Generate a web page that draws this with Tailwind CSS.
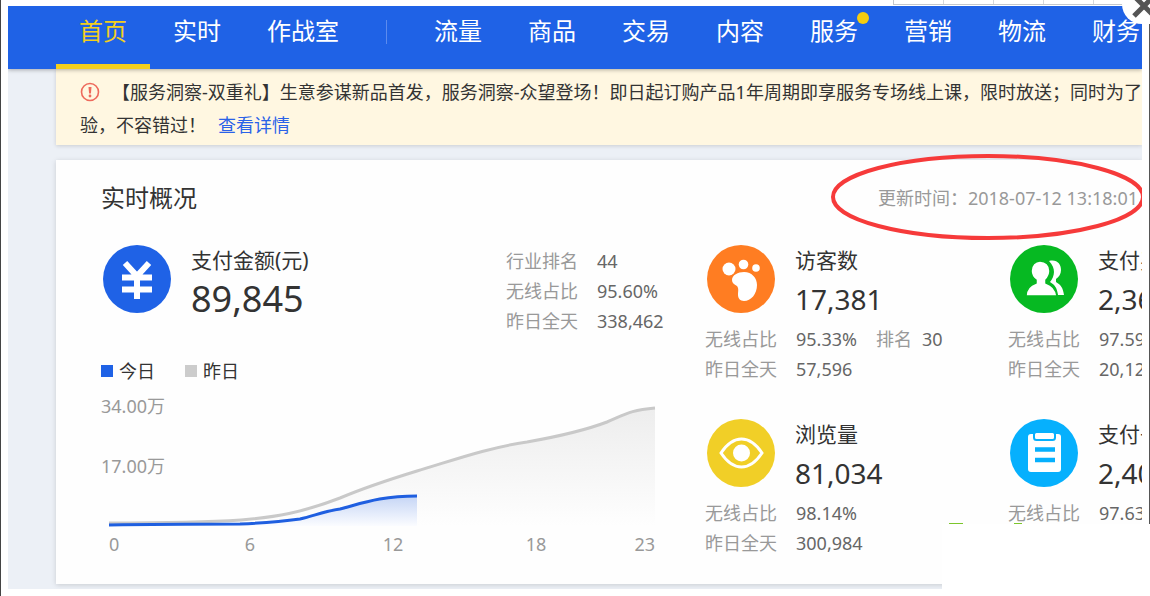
<!DOCTYPE html>
<html lang="zh-CN">
<head>
  <meta charset="UTF-8" />
  <meta name="viewport" content="width=device-width, initial-scale=1.0"/>
  <title>生意参谋 - 首页</title>
  <script src="https://cdn.jsdelivr.net/npm/@tailwindcss/browser@4"></script>
</head>
<body class="bg-white font-['Noto_Sans','Noto_Sans_CJK_SC',sans-serif] text-lg text-[#333]">

  <div class="relative min-h-screen overflow-hidden border-l border-[#444] pt-1.5 pr-2 pl-[7px]">

    <!-- browser tab edges above the page -->
    <div class="absolute top-0 right-0 flex h-[5px] w-[257px] border-b border-l border-[#c4c8cc]">
      <span class="w-[50px] border-r border-[#d4d8dc]"></span>
      <span class="w-[50px] border-r border-[#d4d8dc]"></span>
      <span class="w-[50px] border-r border-[#d4d8dc]"></span>
      <span class="w-[50px] border-r border-[#d4d8dc]"></span>
    </div>

    <div class="overflow-hidden bg-[#ecf0f6] pb-[5px]">
      <nav class="relative z-10 flex h-[63px] items-stretch bg-[#1f62e6] pl-12 text-2xl leading-[50px] whitespace-nowrap text-white shadow-[0_1px_4px_rgba(0,0,0,0.3)]">
        <a href="#" class="border-b-[5px] border-[#f3cf1d] px-[23px] text-[#f3cf1d]">首页</a>
        <a href="#" class="px-[23px]">实时</a>
        <a href="#" class="px-[23px]">作战室</a>
        <span class="mx-6 mt-3.5 h-6 w-px shrink-0 bg-[#5c8bee]"></span>
        <a href="#" class="px-[23px]">流量</a>
        <a href="#" class="px-[23px]">商品</a>
        <a href="#" class="px-[23px]">交易</a>
        <a href="#" class="px-[23px]">内容</a>
        <a href="#" class="relative px-[23px]">服务<span class="absolute top-1.5 right-3 size-3 rounded-full bg-[#f5cd10]"></span></a>
        <a href="#" class="px-[23px]">营销</a>
        <a href="#" class="px-[23px]">物流</a>
        <a href="#" class="px-[23px]">财务</a>
      </nav>

      <main class="pl-12">
        <section class="bg-[#fff7e1] pt-[7px] pb-[3px] pl-6 leading-[33px] whitespace-nowrap shadow-[0_1px_4px_rgba(0,0,0,0.15)]">
          <p>
            <svg class="mr-3 mb-1 inline-block size-5" viewBox="0 0 20 20" fill="none">
              <circle cx="10" cy="10" r="8.5" stroke="#ee6a5c" stroke-width="1.6"/>
              <path d="M8.500 5h3l-.6 6.500H9.100z" fill="#ee6a5c"/>
              <circle cx="10" cy="14" r="1.4" fill="#ee6a5c"/>
            </svg>【服务洞察-双重礼】生意参谋新品首发，服务洞察-众望登场！即日起订购产品1年周期即享服务专场线上课，限时放送；同时为了<br>
            验，不容错过！<a href="#" class="ml-3 text-[#2a62e8]">查看详情</a>
          </p>
        </section>

        <section class="mt-[15px] bg-[#fefefe] pt-[22px] pb-6 pl-[45px] shadow-[0_1px_5px_rgba(0,0,0,0.15)]">
          <header class="flex items-center justify-between pr-1 leading-8">
            <h1 class="text-2xl leading-8">实时概况</h1>
            <p class="text-[#999]">更新时间：2018-07-12 13:18:01</p>
          </header>

          <div class="mt-[31px] flex">
            <!-- payment amount and trend -->
            <div class="w-[604px] shrink-0">
              <div class="flex">
                <svg class="ml-0.5 size-[68px]" viewBox="0 0 68 68">
                  <circle cx="34" cy="34" r="34" fill="#1f62e6"/>
                  <path d="M22 18l12 13 12-13M19 32.500h30M19 44.500h30M34 30v24" fill="none" stroke="#fff" stroke-width="6"/>
                </svg>
                <div class="ml-5 w-[315px] pt-px">
                  <h2 class="text-[21px] leading-7">支付金额(元)</h2>
                  <p class="text-4xl leading-[50px]">89,845</p>
                </div>
                <dl class="grid grid-cols-[91px_auto] content-start pt-px leading-[30px]">
                  <dt class="text-[#999]">行业排名</dt><dd class="text-[#666]">44</dd>
                  <dt class="text-[#999]">无线占比</dt><dd class="text-[#666]">95.60%</dd>
                  <dt class="text-[#999]">昨日全天</dt><dd class="text-[#666]">338,462</dd>
                </dl>
              </div>

              <div class="mt-[21px] flex gap-[30px] leading-7">
                <span class="flex items-center gap-1.5"><i class="size-3 bg-[#1f62e6]"></i>今日</span>
                <span class="flex items-center gap-1.5"><i class="size-3 bg-[#ccc]"></i>昨日</span>
              </div>

              <svg class="mt-2.5 h-[165px] w-[560px]" viewBox="0 0 560 165">
                <defs>
                  <linearGradient id="gray" x1="0" y1="0" x2="0" y2="1">
                    <stop offset="0" stop-color="#ededed"/>
                    <stop offset="1" stop-color="#fefefe"/>
                  </linearGradient>
                  <linearGradient id="blue" x1="0" y1="0" x2="0" y2="1">
                    <stop offset="0" stop-color="#c5d5f5"/>
                    <stop offset="1" stop-color="#fbfcff"/>
                  </linearGradient>
                </defs>
                <path fill="url(#gray)" d="M8 128C60 128 110 127 140 125C175 122 200 118 239 103C265 92 290 84 316 76C350 66 385 53 426 47C460 41 485 35 506 27C525 19 530 15 554 13V131H8z"/>
                <path fill="none" stroke="#c9c9c9" stroke-width="3" d="M8 128C60 128 110 127 140 125C175 122 200 118 239 103C265 92 290 84 316 76C350 66 385 53 426 47C460 41 485 35 506 27C525 19 530 15 554 13"/>
                <path fill="url(#blue)" d="M8 130C60 129 110 129 139 129C165 128 185 126 199 124C215 120 225 116 239 114C262 108 280 101 316 101V131H8z"/>
                <path fill="none" stroke="#1f5fe0" stroke-width="3" d="M8 130C60 129 110 129 139 129C165 128 185 126 199 124C215 120 225 116 239 114C262 108 280 101 316 101"/>
                <g class="text-lg" fill="#999">
                  <text x="0" y="18">34.00万</text>
                  <text x="0" y="78">17.00万</text>
                  <text x="8" y="156">0</text>
                  <text x="149" y="156" text-anchor="middle">6</text>
                  <text x="292" y="156" text-anchor="middle">12</text>
                  <text x="435" y="156" text-anchor="middle">18</text>
                  <text x="554" y="156" text-anchor="end">23</text>
                </g>
              </svg>
            </div>

            <!-- other metrics -->
            <div class="grid shrink-0 grid-cols-[303px_303px] content-start gap-y-[35px] whitespace-nowrap">
              <article>
                <div class="flex h-[79px]">
                  <svg class="ml-0.5 size-[68px]" viewBox="0 0 68 68">
                    <circle cx="34" cy="34" r="34" fill="#ff7d22"/>
                    <g fill="#fff">
                      <circle cx="22" cy="24" r="6.5"/>
                      <circle cx="36.5" cy="19.5" r="4.800"/>
                      <circle cx="49" cy="23" r="3.800"/>
                      <path d="M37 27c8 0 13 6 13 13 0 9-6 16-13 16-4 0-6-3-6-6 0-4 1-6-1-9-3-2-5-3-5-6 0-5 6-8 12-8z"/>
                    </g>
                  </svg>
                  <div class="ml-5 pt-px">
                    <h2 class="text-[21px] leading-7">访客数</h2>
                    <p class="text-[28px] leading-[50px]">17,381</p>
                  </div>
                </div>
                <dl class="grid grid-cols-[91px_80px_46px_auto] leading-[30px]">
                  <dt class="text-[#999]">无线占比</dt><dd class="text-[#666]">95.33%</dd>
                  <dt class="text-[#999]">排名</dt><dd class="text-[#666]">30</dd>
                  <dt class="text-[#999]">昨日全天</dt><dd class="text-[#666]">57,596</dd>
                </dl>
              </article>

              <article>
                <div class="flex h-[79px]">
                  <svg class="ml-0.5 size-[68px]" viewBox="0 0 68 68">
                    <circle cx="34" cy="34" r="34" fill="#06b922"/>
                    <g fill="#fff">
                      <path d="M39 16c8-2 12 3 12 9 0 4-2 7-5 9v3c5 3 7 6 8 13h-6c-1-7-3-10-8-13 5-6 6-14-1-21z"/>
                      <path d="M30 16c6 0 10 4 10 10 0 4-2 7-4 9v3c6 2 10 6 11 13H16c0-7 4-11 10-13v-3c-3-2-5-5-5-9 0-6 4-10 9-10z" stroke="#06b922" stroke-width="1.5"/>
                    </g>
                  </svg>
                  <div class="ml-5 pt-px">
                    <h2 class="text-[21px] leading-7">支付买家数</h2>
                    <p class="text-[28px] leading-[50px]">2,36</p>
                  </div>
                </div>
                <dl class="grid grid-cols-[91px_auto] leading-[30px]">
                  <dt class="text-[#999]">无线占比</dt><dd class="text-[#666]">97.59</dd>
                  <dt class="text-[#999]">昨日全天</dt><dd class="text-[#666]">20,12</dd>
                </dl>
              </article>

              <article>
                <div class="flex h-[79px]">
                  <svg class="ml-0.5 size-[68px]" viewBox="0 0 68 68">
                    <circle cx="34" cy="34" r="34" fill="#f1cf27"/>
                    <path d="M14 34c6-9 13-14 20.500-14S49 25 55 34c-6 9-13 14-20.500 14S20 43 14 34z" fill="none" stroke="#fff" stroke-width="3"/>
                    <circle cx="34.5" cy="34" r="8.5" fill="#fff"/>
                  </svg>
                  <div class="ml-5 pt-px">
                    <h2 class="text-[21px] leading-7">浏览量</h2>
                    <p class="text-[28px] leading-[50px]">81,034</p>
                  </div>
                </div>
                <dl class="grid grid-cols-[91px_auto] leading-[30px]">
                  <dt class="text-[#999]">无线占比</dt><dd class="text-[#666]">98.14%</dd>
                  <dt class="text-[#999]">昨日全天</dt><dd class="text-[#666]">300,984</dd>
                </dl>
              </article>

              <article>
                <div class="flex h-[79px]">
                  <svg class="ml-0.5 size-[68px]" viewBox="0 0 68 68">
                    <circle cx="34" cy="34" r="34" fill="#06b0fd"/>
                    <rect x="18" y="15" width="33" height="38" rx="3" fill="#fff"/>
                    <rect x="24" y="13" width="21" height="8" rx="2.5" fill="#fff" stroke="#06b0fd" stroke-width="2"/>
                    <path d="M25 30.500h20M25 41h20" stroke="#06b0fd" stroke-width="4.5"/>
                  </svg>
                  <div class="ml-5 pt-px">
                    <h2 class="text-[21px] leading-7">支付子订单数</h2>
                    <p class="text-[28px] leading-[50px]">2,40</p>
                  </div>
                </div>
                <dl class="grid grid-cols-[91px_auto] leading-[30px]">
                  <dt class="text-[#999]">无线占比</dt><dd class="text-[#666]">97.63</dd>
                </dl>
              </article>
            </div>
          </div>
        </section>
      </main>
    </div>

    <!-- red ring round the update time -->
    <div class="absolute top-[152px] right-2 h-[90px] w-[312px] overflow-hidden">
      <svg class="h-[90px] w-[316px]" viewBox="0 0 316 90">
        <ellipse cx="158" cy="45" rx="155" ry="41" fill="none" stroke="#f63a3a" stroke-width="4"/>
      </svg>
    </div>

    <!-- blank corner -->
    <div class="absolute top-[524px] right-0 h-[72px] w-[208px] bg-white"></div>
    <span class="absolute top-[523px] right-[187px] h-px w-3.5 bg-[#7cc62c]"></span>
    <span class="absolute top-[523px] right-[128px] h-px w-2 bg-[#7cc62c]"></span>
    <span class="absolute top-6 right-0 h-[500px] w-px bg-[#555]"></span>

    <button type="button" aria-label="关闭" class="absolute -top-4 -right-3 z-20 size-10 rounded-full bg-white">
      <svg class="size-10" viewBox="0 0 40 40" stroke="#555" stroke-width="5"><path d="M12 32l20-20M12 12l20 20"/></svg>
    </button>
  </div>

</body>
</html>
